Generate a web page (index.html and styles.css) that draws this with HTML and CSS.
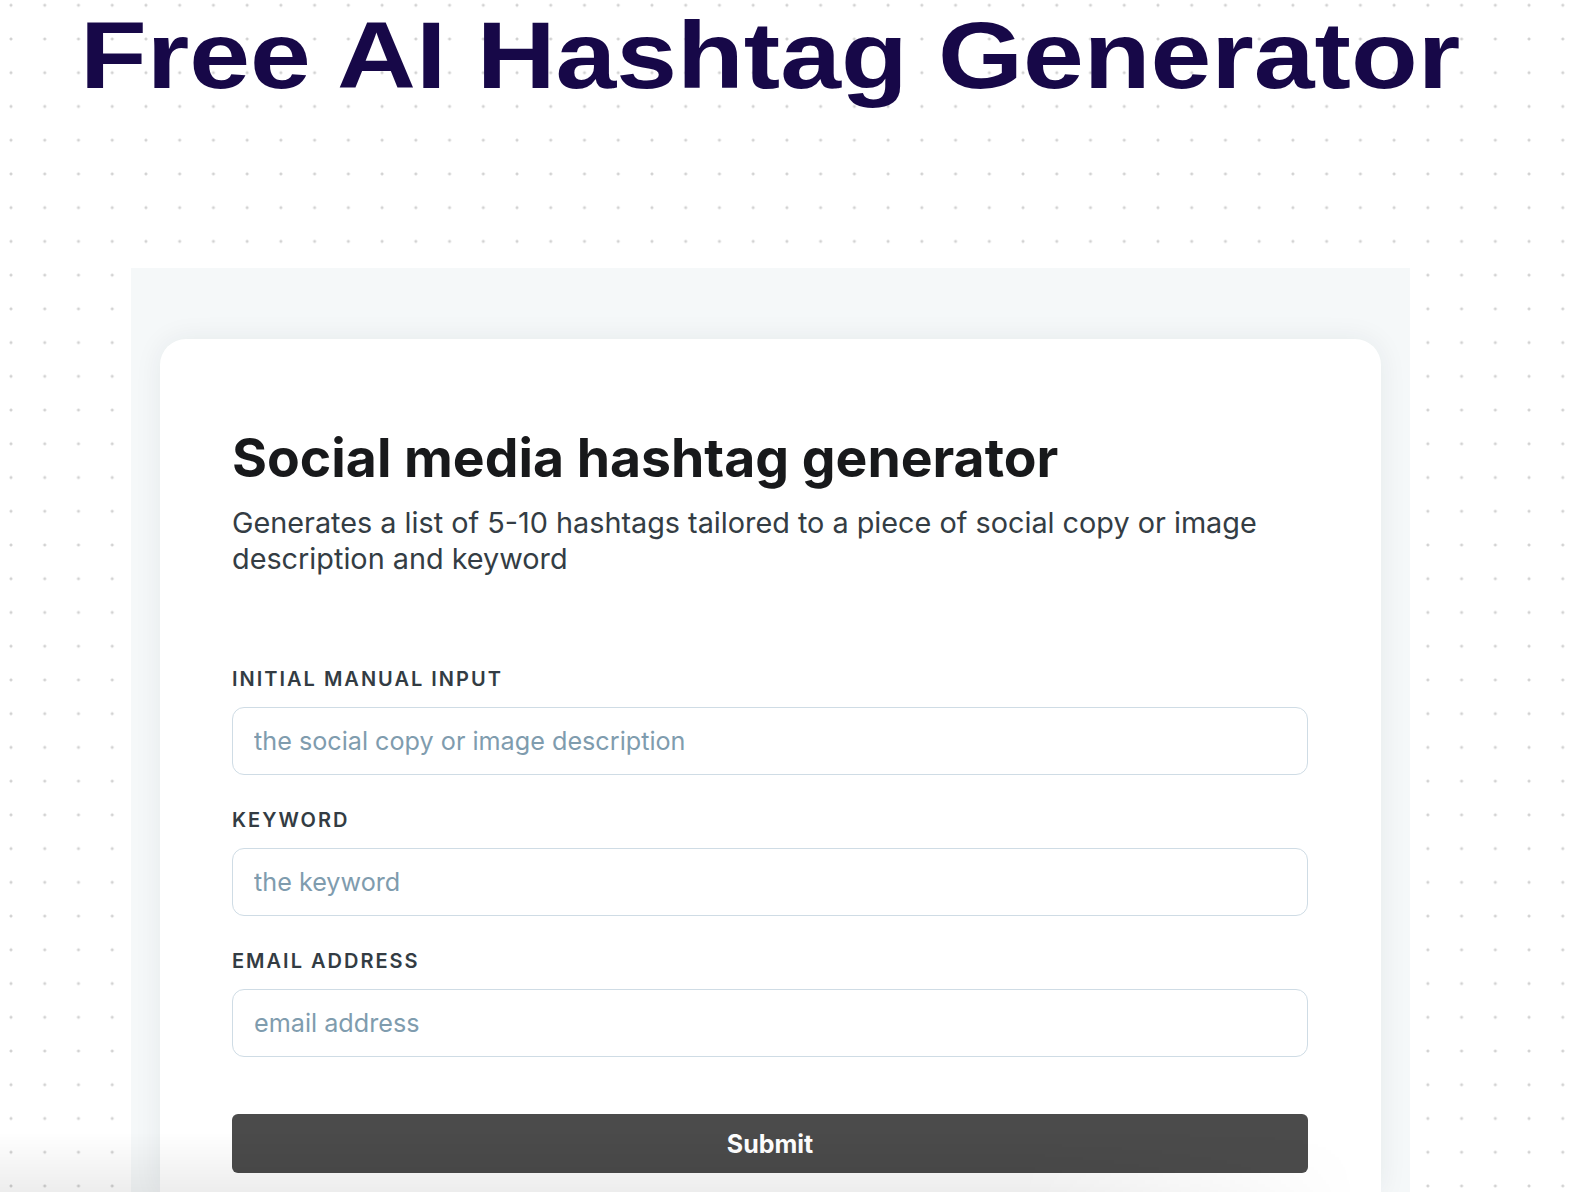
FILE: index.html
```html
<!DOCTYPE html>
<html lang="en">
<head>
<meta charset="utf-8">
<title>Free AI Hashtag Generator</title>
<link rel="stylesheet" href="styles.css">
</head>
<body>
<div class="page">
  <header class="hero">
    <h1 class="hero-title"><span>Free AI Hashtag Generator</span></h1>
  </header>
  <section class="panel">
    <div class="card">
      <h2 class="card-title">Social media hashtag generator</h2>
      <p class="card-desc">Generates a list of 5-10 hashtags tailored to a piece of social copy or image description and keyword</p>
      <form class="form">
        <div class="field">
          <label class="field-label" for="f1">Initial manual input</label>
          <input class="field-input" id="f1" type="text" placeholder="the social copy or image description">
        </div>
        <div class="field">
          <label class="field-label" for="f2">Keyword</label>
          <input class="field-input" id="f2" type="text" placeholder="the keyword">
        </div>
        <div class="field">
          <label class="field-label" for="f3">Email address</label>
          <input class="field-input" id="f3" type="text" placeholder="email address">
        </div>
        <button class="submit" type="button">Submit</button>
      </form>
    </div>
  </section>
</div>
<div class="bottom-fade"></div>
</body>
</html>
```

FILE: styles.css
```css
html, body {
  margin: 0;
  padding: 0;
}
body {
  width: 1576px;
  height: 1192px;
  overflow: hidden;
  background-color: #ffffff;
  background-image: radial-gradient(circle, #d2d2d2 0, #d2d2d2 1.2px, rgba(210,210,210,0) 1.8px);
  background-size: 33.74px 33.74px;
  background-position: -5.87px 22.13px;
  font-family: "Inter", "Liberation Sans", sans-serif;
}
.page {
  width: 1541px;
}
.hero {
  height: 268px;
  text-align: center;
}
.hero-title {
  margin: 0;
  padding-top: 8px;
  font-family: "Liberation Sans", Arial, sans-serif;
  font-weight: 700;
  font-size: 95px;
  line-height: 1;
  color: #170848;
  white-space: nowrap;
}
.hero-title span {
  display: inline-block;
  transform: scaleX(1.15);
  transform-origin: center;
}
.panel {
  width: 1279px;
  margin: 0 auto;
  padding: 71px 29px 0;
  box-sizing: border-box;
  background: #f5f8f9;
  height: 924px;
}
.card {
  background: #ffffff;
  border-radius: 26px 26px 0 0;
  box-shadow: 0 0 28px rgba(20, 40, 60, 0.07);
  padding: 87px 73px 0 72px;
  height: 853px;
  box-sizing: border-box;
}
.card-title {
  margin: 0;
  font-size: 53.5px;
  font-weight: 700;
  line-height: 64px;
  letter-spacing: 0;
  color: #18191b;
}
.card-desc {
  margin: 15px 0 0;
  font-size: 28.8px;
  line-height: 36px;
  color: #343d44;
}
.form {
  margin-top: 90px;
  display: flex;
  flex-direction: column;
}
.field {
  display: flex;
  flex-direction: column;
  margin-bottom: 33px;
}
.field-label {
  font-size: 20px;
  line-height: 24px;
  font-weight: 600;
  letter-spacing: 0.1em;
  text-transform: uppercase;
  color: #333c43;
  margin-bottom: 16px;
}
.field-input {
  height: 68px;
  box-sizing: border-box;
  border: 1px solid #cfdce5;
  border-radius: 12px;
  padding: 0 21px;
  font-family: "Inter", sans-serif;
  font-size: 25.2px;
  color: #333;
  background: #fff;
  outline: none;
}
.field-input::placeholder {
  color: #7f9cae;
}
.submit {
  margin-top: 24px;
  height: 59px;
  border: none;
  border-radius: 6px;
  background: #4b4b4b;
  color: #ffffff;
  font-family: "Inter", sans-serif;
  font-weight: 700;
  font-size: 25px;
}
.bottom-fade {
  position: fixed;
  left: 0;
  bottom: 0;
  width: 1360px;
  height: 60px;
  background: linear-gradient(to bottom, rgba(0,0,0,0), rgba(0,0,0,0.07));
  -webkit-mask-image: linear-gradient(to right, #000 75%, transparent);
  mask-image: linear-gradient(to right, #000 75%, transparent);
  pointer-events: none;
}
```
